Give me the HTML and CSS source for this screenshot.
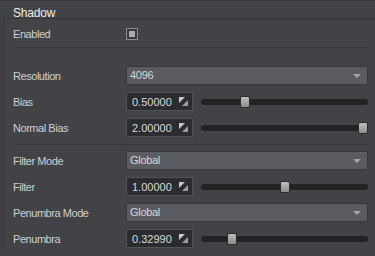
FILE: index.html
```html
<!DOCTYPE html>
<html>
<head>
	<title>Shadow</title>
	<link rel="stylesheet" href="styles.css">
</head>
<body>
	<div class="title">Shadow</div>
	<div class="group">
		<div class="row check-row">
			<span class="label">Enabled</span>
			<span class="checkbox"><span class="tick"></span></span>
		</div>
		<div class="sep"></div>

		<div class="section first">
			<div class="row">
				<span class="label">Resolution</span>
				<div class="combo">4096<span class="arrow"></span></div>
			</div>
			<div class="row">
				<span class="label">Bias</span>
				<div class="spin">0.50000<svg class="drag" width="9" height="9" viewBox="0 0 9 9"><polygon points="0,0 6,0 0,6" fill="#c9c9c9"/><polygon points="9,3 9,9 3,9" fill="#9c9c9c"/></svg></div>
				<div class="slider"><div class="track"></div><div class="thumb" style="left:25%"></div></div>
			</div>
			<div class="row">
				<span class="label">Normal Bias</span>
				<div class="spin">2.00000<svg class="drag" width="9" height="9" viewBox="0 0 9 9"><polygon points="0,0 6,0 0,6" fill="#c9c9c9"/><polygon points="9,3 9,9 3,9" fill="#9c9c9c"/></svg></div>
				<div class="slider"><div class="track"></div><div class="thumb" style="left:100%"></div></div>
			</div>
		</div>
		<div class="sep"></div>

		<div class="section">
			<div class="row">
				<span class="label">Filter Mode</span>
				<div class="combo">Global<span class="arrow"></span></div>
			</div>
			<div class="row">
				<span class="label">Filter</span>
				<div class="spin">1.00000<svg class="drag" width="9" height="9" viewBox="0 0 9 9"><polygon points="0,0 6,0 0,6" fill="#c9c9c9"/><polygon points="9,3 9,9 3,9" fill="#9c9c9c"/></svg></div>
				<div class="slider"><div class="track"></div><div class="thumb" style="left:50%"></div></div>
			</div>
			<div class="row">
				<span class="label">Penumbra Mode</span>
				<div class="combo">Global<span class="arrow"></span></div>
			</div>
			<div class="row">
				<span class="label">Penumbra</span>
				<div class="spin">0.32990<svg class="drag" width="9" height="9" viewBox="0 0 9 9"><polygon points="0,0 6,0 0,6" fill="#c9c9c9"/><polygon points="9,3 9,9 3,9" fill="#9c9c9c"/></svg></div>
				<div class="slider"><div class="track"></div><div class="thumb" style="left:16.5%"></div></div>
			</div>
		</div>
	</div>
</body>
</html>
```

FILE: styles.css
```css
body{
	margin:0;
	padding:0;
	height:256px;
	overflow:hidden;
	background-color:#424347;
	border-top:1px solid #393a3d;
	font-family:"Liberation Sans", Arial, sans-serif;
	font-size:11px;
	color:#d2d2d2;
}
.title{
	height:17px;
	line-height:24px;
	padding-left:13px;
	font-size:12px;
	letter-spacing:-0.2px;
	color:#ececec;
}
.group{
	margin-left:3px;
	border-top:1px solid #363739;
	border-left:1px solid #363739;
	border-top-left-radius:4px;
	padding:5px 7px 0 9px;
}
.row{
	display:flex;
	align-items:center;
	height:19px;
}
.section .row + .row{
	margin-top:7px;
}
.label{
	width:113px;
	flex-shrink:0;
	letter-spacing:-0.45px;
	color:#cfcfcf;
}
.sep{
	height:1px;
	background-color:#37383b;
	margin-top:4px;
}
.section{
	margin-top:6px;
	margin-bottom:7px;
}
.section.first{
	margin-top:18px;
}
.checkbox{
	display:inline-block;
	width:6px;
	height:6px;
	padding:2px;
	border:1px solid #8b8c8e;
	background-color:#38393c;
}
.tick{
	display:block;
	width:6px;
	height:6px;
	background-color:#acadae;
}
.combo{
	position:relative;
	flex:1;
	height:17px;
	line-height:17px;
	padding-left:3px;
	background-color:#5b5c61;
	border:1px solid #37383b;
	border-radius:2px;
	letter-spacing:-0.3px;
	color:#d6d6d6;
}
.arrow{
	position:absolute;
	right:6px;
	top:7px;
	width:0;
	height:0;
	border-left:4px solid transparent;
	border-right:4px solid transparent;
	border-top:4px solid #a3a4a6;
}
.spin{
	display:flex;
	align-items:center;
	justify-content:space-between;
	box-sizing:border-box;
	width:67px;
	height:19px;
	padding:0 4px 0 5px;
	background-color:#2b2c2f;
	border:1px solid #515256;
	color:#dadada;
}
.slider{
	position:relative;
	flex:1;
	height:12px;
	margin-left:8px;
	margin-right:10px;
}
.track{
	position:absolute;
	left:0;
	right:-10px;
	top:3px;
	height:6px;
	background-color:#222325;
	border-radius:3px;
}
.thumb{
	position:absolute;
	top:0;
	box-sizing:border-box;
	width:10px;
	height:12px;
	border:1px solid #2a2b2d;
	border-radius:2px;
	background:linear-gradient(#bdbdbd, #8e8e8e);
}
```
